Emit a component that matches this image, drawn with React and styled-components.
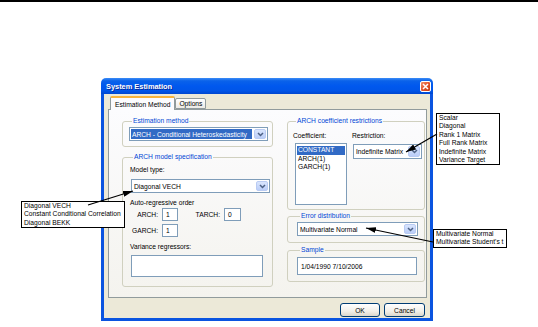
import React from 'react';
import styled, { createGlobalStyle } from 'styled-components';

const GlobalStyle = createGlobalStyle`
  html, body {
    margin: 0;
    padding: 0;
    background: #fff;
  }
  body {
    font-family: "Liberation Sans", Arial, sans-serif;
    font-size: 6.7px;
    color: #000;
  }
  * {
    box-sizing: border-box;
  }
`;

const Page = styled.div`
  position: relative;
  width: 538px;
  height: 327px;
  overflow: hidden;
`;

const TopRule = styled.div`
  height: 2px;
  background: #000;
`;

const Window = styled.div`
  width: 332px;
  margin: 76px 0 0 101px;
  display: flex;
  flex-direction: column;
`;

const TitleBar = styled.div`
  height: 16px;
  display: flex;
  align-items: center;
  justify-content: space-between;
  padding: 0 2px 0 5px;
  border-radius: 5px 5px 0 0;
  background: linear-gradient(
    to bottom,
    #3b8cf7 0%,
    #0a62ea 18%,
    #0058ee 50%,
    #0055e8 80%,
    #0047cf 100%
  );
`;

const Title = styled.span`
  color: #fff;
  font-weight: bold;
  font-size: 7.4px;
  text-shadow: 1px 1px 0 #0b2a9a;
`;

const CloseButton = styled.div`
  width: 11px;
  height: 11px;
  border: 1px solid #fff;
  border-radius: 2px;
  background: linear-gradient(135deg, #f0906c 0%, #e2532d 50%, #c23a12 100%);
  display: flex;
  align-items: center;
  justify-content: center;
`;

const Body = styled.div`
  display: flex;
  flex-direction: column;
  background: #ece9d8;
  border: 3px solid #0a54e0;
  border-top: none;
  padding: 3px 3px 1px 4px;
`;

const TabRow = styled.div`
  height: 13px;
  display: flex;
  align-items: flex-end;
  padding-left: 2px;
  margin-bottom: -1px;
  position: relative;
  z-index: 1;
`;

const Tab = styled.div`
  height: ${({ active }) => (active ? '14px' : '11px')};
  padding: 0 ${({ active }) => (active ? '4px' : '3px')};
  display: flex;
  align-items: center;
  border: 1px solid #919b9c;
  border-top: ${({ active }) => (active ? '2px solid #f8b43b' : '1px solid #919b9c')};
  border-bottom: ${({ active }) => (active ? 'none' : '1px solid #919b9c')};
  border-radius: 2px 2px 0 0;
  background: ${({ active }) =>
    active ? '#fcfcfe' : 'linear-gradient(#ffffff, #ecebe6)'};
  margin-bottom: ${({ active }) => (active ? '0' : '1px')};
`;

const Panel = styled.div`
  height: 189px;
  border: 1px solid #919b9c;
  background: linear-gradient(#fcfcfe, #f4f3ee);
  padding: 7px 1px 0 13px;
  display: grid;
  grid-template-columns: 151px 138px;
  column-gap: 14px;
  align-items: start;
`;

const Column = styled.div`
  display: flex;
  flex-direction: column;
`;

const Group = styled.fieldset`
  margin: ${({ gap }) => gap || 0}px 0 0;
  padding: ${({ pad }) => pad};
  border: 1px solid #d0d0bf;
  border-radius: 3px;
  display: flex;
  flex-direction: column;
  align-items: flex-start;
  min-width: 0;
`;

const Legend = styled.legend`
  color: #0046d5;
  padding: 0 1px;
  margin-left: 3px;
  line-height: 8px;
`;

const Label = styled.div`
  line-height: 9px;
  margin: ${({ m }) => m || '0'};
  white-space: nowrap;
`;

const Combo = styled.div`
  width: ${({ w }) => w}px;
  height: ${({ h }) => h || 14}px;
  margin: ${({ m }) => m || '0'};
  border: 1px solid #7f9db9;
  background: #fff;
  display: flex;
  align-items: stretch;
`;

const ComboValue = styled.div`
  flex: 1;
  margin: 1px;
  padding-left: 1px;
  display: flex;
  align-items: center;
  white-space: nowrap;
  overflow: hidden;
  background: ${({ selected }) => (selected ? '#316ac5' : 'transparent')};
  color: ${({ selected }) => (selected ? '#fff' : '#000')};
`;

const DropButton = styled.div`
  width: 12px;
  margin: 1px;
  border-radius: 2px;
  border: 1px solid #b9cbf3;
  background: linear-gradient(#d9e5fd, #bacdf8);
  display: flex;
  align-items: center;
  justify-content: center;
`;

const Field = styled.div`
  width: ${({ w }) => w}px;
  height: ${({ h }) => h}px;
  margin: ${({ m }) => m || '0'};
  border: 1px solid #7f9db9;
  background: #fff;
  padding-left: 3px;
  display: flex;
  align-items: center;
  white-space: nowrap;
`;

const OrderGrid = styled.div`
  display: grid;
  grid-template-columns: 32px 16px 46px 17px;
  grid-auto-rows: 13px;
  row-gap: 3px;
  margin-top: 1px;
  align-items: center;
`;

const OrderLabel = styled.span`
  text-align: right;
  padding-right: 4px;
`;

const OrderBox = styled.div`
  height: 13px;
  border: 1px solid #7f9db9;
  background: #fff;
  padding-left: 3px;
  display: flex;
  align-items: center;
`;

const RestrictGrid = styled.div`
  display: grid;
  grid-template-columns: 59px 70px;
  align-items: start;
  margin-top: 6px;
`;

const ListBox = styled.div`
  width: 52px;
  height: 62px;
  margin: 3px 0 0 2px;
  border: 1px solid #7f9db9;
  background: #fff;
  padding: 2px 1px;
`;

const ListItem = styled.div`
  line-height: 8.5px;
  padding-left: 1px;
  background: ${({ selected }) => (selected ? '#316ac5' : 'transparent')};
  color: ${({ selected }) => (selected ? '#fff' : '#000')};
`;

const ButtonRow = styled.div`
  display: flex;
  justify-content: flex-end;
  gap: 4px;
  margin-top: 5px;
  padding-right: 2px;
`;

const Button = styled.div`
  width: ${({ w }) => w}px;
  height: 14px;
  border: 1px solid #003c74;
  border-radius: 3px;
  background: linear-gradient(#ffffff 0%, #f1efe9 60%, #dcd7cb 100%);
  display: flex;
  align-items: center;
  justify-content: center;
`;

const Callout = styled.div`
  position: absolute;
  left: ${({ x }) => x}px;
  top: ${({ y }) => y}px;
  min-width: ${({ w }) => w}px;
  border: 1px solid #000;
  background: #fff;
  padding: 0 3px 0 2px;
  line-height: 8.4px;
  white-space: nowrap;
  z-index: 3;
`;

const Arrows = styled.svg`
  position: absolute;
  left: 0;
  top: 0;
  z-index: 4;
  pointer-events: none;
`;

const Chevron = () => (
  <svg width="7" height="5" viewBox="0 0 7 5">
    <path d="M1 1 L3.5 3.5 L6 1" fill="none" stroke="#4d6185" strokeWidth="1.5" />
  </svg>
);

const Select = ({ w, h, m, value, selected }) => (
  <Combo w={w} h={h} m={m}>
    <ComboValue selected={selected}>{value}</ComboValue>
    <DropButton>
      <Chevron />
    </DropButton>
  </Combo>
);

const arrows = [
  [88, 205, 133, 191],
  [437, 134, 406, 152],
  [433, 242, 366, 228],
];

export default function App() {
  return (
    <Page>
      <GlobalStyle />
      <TopRule />
      <Window>
        <TitleBar>
          <Title>System Estimation</Title>
          <CloseButton>
            <svg width="7" height="7" viewBox="0 0 7 7">
              <path d="M1 1 L6 6 M6 1 L1 6" stroke="#fff" strokeWidth="1.5" />
            </svg>
          </CloseButton>
        </TitleBar>
        <Body>
          <TabRow>
            <Tab active>Estimation Method</Tab>
            <Tab>Options</Tab>
          </TabRow>
          <Panel>
            <Column>
              <Group pad="2px 4px 5px 6px">
                <Legend>Estimation method</Legend>
                <Select w={139} value="ARCH - Conditional Heteroskedasticity" selected />
              </Group>
              <Group gap={6} pad="0 2px 9px 7px">
                <Legend>ARCH model specification</Legend>
                <Label m="4px 0 0">Model type:</Label>
                <Select w={139} m="5px 0 0 1px" value="Diagonal VECH" />
                <Label m="5px 0 0">Auto-regressive order</Label>
                <OrderGrid>
                  <OrderLabel>ARCH:</OrderLabel>
                  <OrderBox>1</OrderBox>
                  <OrderLabel>TARCH:</OrderLabel>
                  <OrderBox>0</OrderBox>
                  <OrderLabel>GARCH:</OrderLabel>
                  <OrderBox>1</OrderBox>
                </OrderGrid>
                <Label m="5px 0 0">Variance regressors:</Label>
                <Field w={132} h={22} m="4px 0 0 1px" />
              </Group>
            </Column>
            <Column>
              <Group pad="0 2px 4px 5px">
                <Legend>ARCH coefficient restrictions</Legend>
                <RestrictGrid>
                  <div>
                    <Label>Coefficient:</Label>
                    <ListBox>
                      <ListItem selected>CONSTANT</ListItem>
                      <ListItem>ARCH(1)</ListItem>
                      <ListItem>GARCH(1)</ListItem>
                    </ListBox>
                  </div>
                  <div>
                    <Label>Restriction:</Label>
                    <Select w={69} h={15} m="4px 0 0 1px" value="Indefinite Matrix" />
                  </div>
                </RestrictGrid>
              </Group>
              <Group gap={2} pad="2px 2px 6px 9px">
                <Legend>Error distribution</Legend>
                <Select w={121} value="Multivariate Normal" />
              </Group>
              <Group gap={3} pad="3px 2px 6px 9px">
                <Legend>Sample</Legend>
                <Field w={120} h={18}>1/04/1990 7/10/2006</Field>
              </Group>
            </Column>
          </Panel>
          <ButtonRow>
            <Button w={40}>OK</Button>
            <Button w={41}>Cancel</Button>
          </ButtonRow>
        </Body>
      </Window>

      <Callout x={21} y={201} w={104}>
        <div>Diagonal VECH</div>
        <div>Constant Conditional Correlation</div>
        <div>Diagonal BEKK</div>
      </Callout>
      <Callout x={436} y={113} w={64}>
        <div>Scalar</div>
        <div>Diagonal</div>
        <div>Rank 1 Matrix</div>
        <div>Full Rank Matrix</div>
        <div>Indefinite Matrix</div>
        <div>Variance Target</div>
      </Callout>
      <Callout x={433} y={229} w={69}>
        <div>Multivariate Normal</div>
        <div>Multivariate Student&apos;s t</div>
      </Callout>

      <Arrows width="538" height="327" viewBox="0 0 538 327">
        <defs>
          <marker
            id="head"
            viewBox="0 0 10 6"
            refX="10"
            refY="3"
            markerWidth="10"
            markerHeight="6"
            markerUnits="userSpaceOnUse"
            orient="auto"
          >
            <path d="M0 0 L10 3 L0 6 Z" fill="#000" />
          </marker>
        </defs>
        {arrows.map(([x1, y1, x2, y2], i) => (
          <line
            key={i}
            x1={x1}
            y1={y1}
            x2={x2}
            y2={y2}
            stroke="#000"
            strokeWidth="1.2"
            markerEnd="url(#head)"
          />
        ))}
      </Arrows>
    </Page>
  );
}
